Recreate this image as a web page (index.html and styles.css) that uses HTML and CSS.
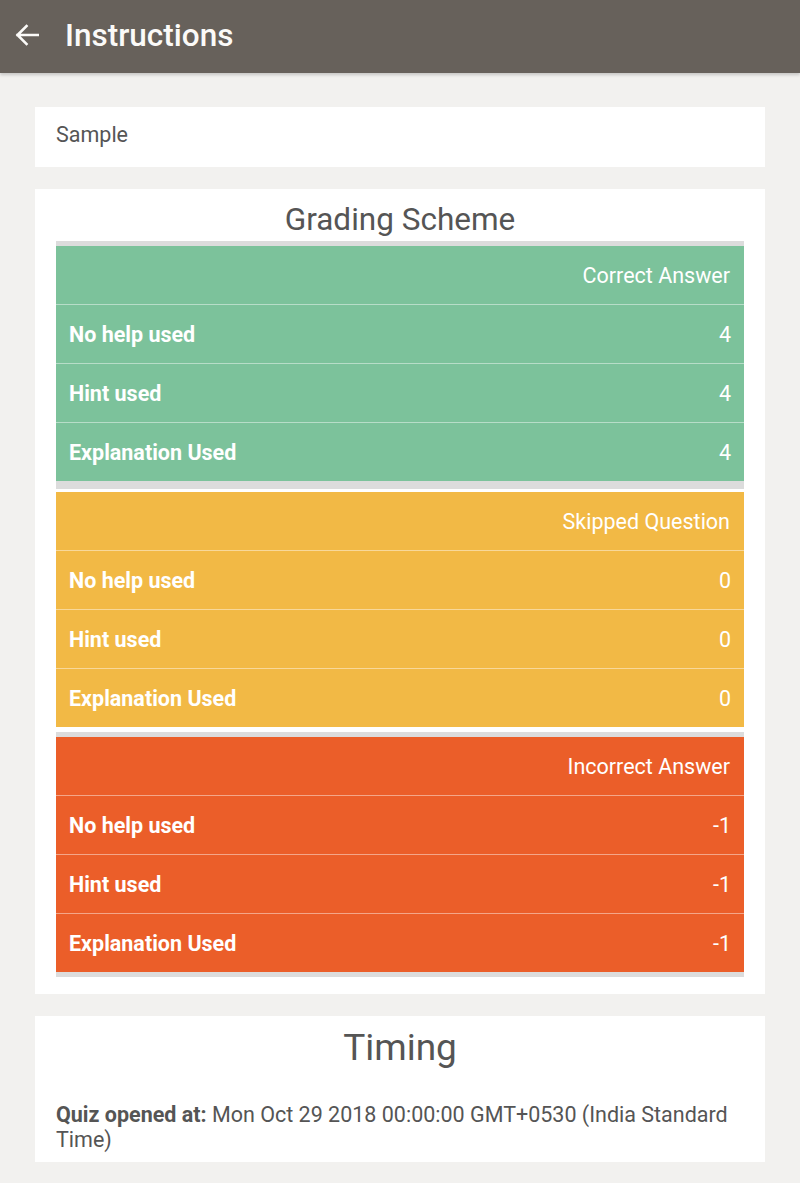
FILE: index.html
```html
<!DOCTYPE html>
<html>
<head>
<meta charset="utf-8">
<link rel="stylesheet" href="styles.css">
</head>
<body>
<header class="appbar">
  <svg class="back" width="24" height="22" viewBox="0 0 24 22"><path d="M23 11H2.5M11.5 2L2.5 11l9 9" fill="none" stroke="#fbfaf8" stroke-width="2.6" stroke-linecap="square"/></svg>
  <h1 class="appbar-title">Instructions</h1>
</header>
<main class="content">
  <section class="card card-sample">Sample</section>
  <section class="card card-grading">
    <h2 class="card-title">Grading Scheme</h2>
    <div class="grade grade-correct">
      <div class="grade-head">Correct Answer</div>
      <div class="grade-row"><span>No help used</span><span class="val">4</span></div>
      <div class="grade-row"><span>Hint used</span><span class="val">4</span></div>
      <div class="grade-row"><span>Explanation Used</span><span class="val">4</span></div>
    </div>
    <div class="grade grade-skipped">
      <div class="grade-head">Skipped Question</div>
      <div class="grade-row"><span>No help used</span><span class="val">0</span></div>
      <div class="grade-row"><span>Hint used</span><span class="val">0</span></div>
      <div class="grade-row"><span>Explanation Used</span><span class="val">0</span></div>
    </div>
    <div class="grade grade-incorrect">
      <div class="grade-head">Incorrect Answer</div>
      <div class="grade-row"><span>No help used</span><span class="val">-1</span></div>
      <div class="grade-row"><span>Hint used</span><span class="val">-1</span></div>
      <div class="grade-row"><span>Explanation Used</span><span class="val">-1</span></div>
    </div>
  </section>
  <section class="card card-timing">
    <h2 class="timing-title">Timing</h2>
    <p class="timing-text"><b>Quiz opened at:</b> Mon Oct 29 2018 00:00:00 GMT+0530 (India Standard Time)</p>
  </section>
</main>
<div class="bottom-edge"></div>
</body>
</html>
```
FILE: styles.css
```css
* { box-sizing: border-box; }
html, body { margin: 0; padding: 0; }
body {
  background: #f2f1ef;
  font-family: Roboto, "Liberation Sans", sans-serif;
  color: #555;
  width: 800px;
  height: 1183px;
  overflow: hidden;
  display: flex;
  flex-direction: column;
}
.appbar {
  height: 73px;
  background: #67615b;
  display: flex;
  align-items: center;
  padding-left: 15px;
  box-shadow: 0 2px 3px rgba(0,0,0,0.18);
  position: relative;
  z-index: 1;
  flex: none;
}
.back { width: 24px; height: 22px; margin-top: -3px; }
.appbar-title {
  margin: -3px 0 0 26px;
  color: #fbfaf8;
  font-size: 31.5px;
  font-weight: 500;
}
.content {
  padding: 34px 35px 0;
  flex: 1;
}
.card {
  background: #fff;
  margin-bottom: 22px;
}
.card-sample {
  height: 60px;
  display: flex;
  align-items: center;
  padding: 0 0 6px 21px;
  font-size: 21.5px;
  color: #555;
}
.card-grading {
  padding: 14px 21px 17px;
}
.card-title {
  margin: 0 0 4px;
  text-align: center;
  font-weight: 400;
  font-size: 31.5px;
  line-height: 34px;
  color: #555;
}
.grade {
  color: #fff;
  font-size: 21.5px;
}
.grade-correct {
  background: #7cc29b;
  border-top: 5px solid #dcdcdc;
  border-bottom: 8px solid #dcdcdc;
  margin-bottom: 3px;
}
.grade-skipped {
  background: #f2b945;
  margin-bottom: 5px;
}
.grade-incorrect {
  background: #eb5e29;
  border-top: 5px solid #dcdcdc;
  border-bottom: 5px solid #dcdcdc;
}
.grade-head {
  height: 58px;
  display: flex;
  align-items: center;
  justify-content: flex-end;
  padding: 0 14px;
}
.grade-row {
  height: 59px;
  border-top: 1px solid rgba(255,255,255,0.45);
  display: flex;
  align-items: center;
  justify-content: space-between;
  padding: 0 13px;
  font-weight: 700;
}
.grade-row .val { font-weight: 400; }
.card-timing {
  padding: 10px 21px 10px;
}
.timing-title {
  margin: 0;
  text-align: center;
  font-weight: 400;
  font-size: 37px;
  line-height: 44px;
  color: #555;
}
.timing-text {
  margin: 32px 0 0;
  font-size: 21.5px;
  line-height: 25px;
  color: #555;
}
.timing-text b { font-weight: 700; }
.bottom-edge {
  height: 3px;
  background: #111;
  flex: none;
}
```
